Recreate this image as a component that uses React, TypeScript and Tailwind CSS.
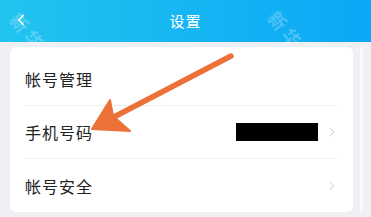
import { ChevronLeft, ChevronRight } from 'lucide-react';

const font = { fontFamily: '"Noto Sans CJK SC", "Noto Sans", sans-serif' };

function Row({ label, last, arrow = true, children }: { label: string; last?: boolean; arrow?: boolean; children?: React.ReactNode }) {
    return (
        <div className={`flex items-center h-[53px] mx-[15px] ${last ? '' : 'border-b border-[#f0f0f2]'}`}>
            <span className="text-[16px] text-[#222] tracking-[1px]">{label}</span>
            <div className="ml-auto flex items-center gap-[7px]">
                {children}
                {arrow && <ChevronRight className="w-[14px] h-[14px] text-[#c4c4c8] -mr-[1px]" strokeWidth={1.6} />}
            </div>
        </div>
    );
}

export default function App() {
    return (
        <div className="relative w-[371px] h-[217px] overflow-hidden bg-[#eef0f3]" style={font}>
            <div className="relative h-[42px] flex items-center justify-center bg-gradient-to-r from-[#22c4ef] to-[#0ca7f6]">
                <ChevronLeft className="absolute left-[12px] top-[11px] w-[18px] h-[18px] text-white" strokeWidth={2} />
                <span className="text-white text-[15px] tracking-[1px]">设置</span>
                <span className="absolute left-[14px] top-[2px] rotate-[50deg] origin-left text-white/25 text-[18px] font-bold tracking-[4px]">新华</span>
                <span className="absolute left-[272px] top-[0px] rotate-[50deg] origin-left text-white/25 text-[18px] font-bold tracking-[4px]">新华</span>
            </div>

            <div className="flex pt-[5px] pr-[8px]">
                <div className="ml-[10px] w-[343px] bg-white rounded-[6px] pt-[6px]">
                    <Row label="帐号管理" arrow={false} />
                    <Row label="手机号码">
                        <div className="w-[82px] h-[18px] bg-black" />
                    </Row>
                    <Row label="帐号安全" last />
                </div>
                <div className="ml-auto w-[3px] bg-[#f8f9fb]" />
            </div>

            <svg className="absolute left-0 top-0" width="371" height="217" viewBox="0 0 371 217">
                <line x1="231" y1="56" x2="112" y2="118" stroke="#ec7139" strokeWidth="5.5" strokeLinecap="round" />
                <polygon points="92,129 110,100 113,116 130,131" fill="#ec7139" stroke="#ec7139" strokeWidth="2" strokeLinejoin="round" />
            </svg>
        </div>
    );
}
